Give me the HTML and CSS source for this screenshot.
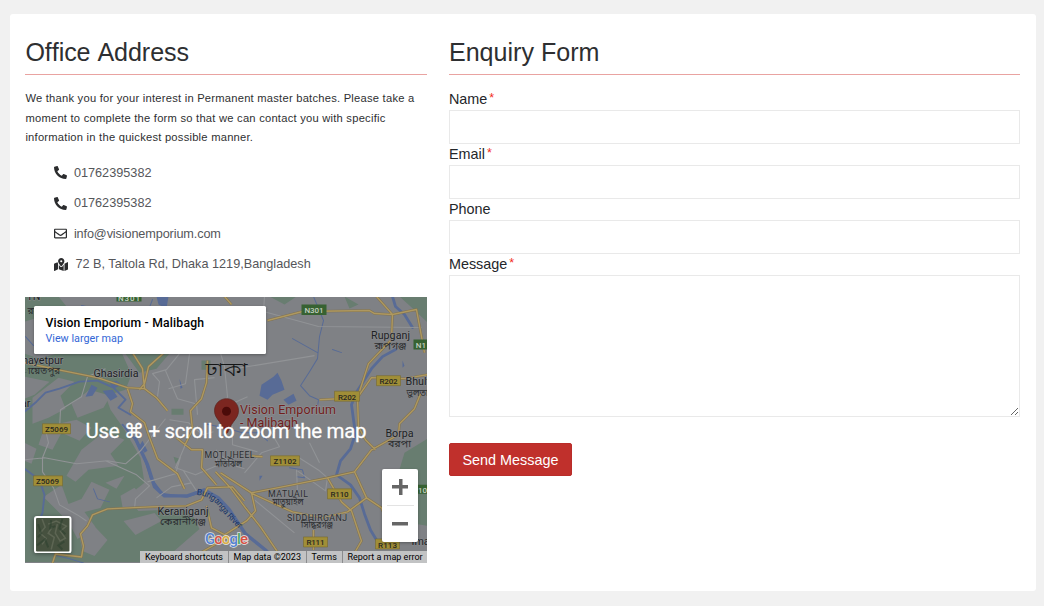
FILE: index.html
```html
<!DOCTYPE html>
<html lang="en">
<head>
<meta charset="utf-8">
<title>Contact</title>
<link rel="stylesheet" href="styles.css">
</head>
<body>
<main class="card">
  <section class="office">
    <h2 class="heading">Office Address</h2>
    <p class="intro">We thank you for your interest in Permanent master batches. Please take a<br>moment to complete the form so that we can contact you with specific<br>information in the quickest possible manner.</p>
    <ul class="contacts">
      <li><svg class="icon phone" viewBox="0 0 512 512"><path d="M493 25 389 1c-11-3-23 3-27 14l-48 112c-4 10-1 21 7 28l60 50c-36 76-98 139-176 176l-50-60c-7-8-18-11-28-7L15 362c-11 5-17 16-14 27l24 104c3 11 12 19 24 19 256 0 463-207 463-463 0-12-8-21-19-24z"/></svg><span class="num">01762395382</span></li>
      <li><svg class="icon phone" viewBox="0 0 512 512"><path d="M493 25 389 1c-11-3-23 3-27 14l-48 112c-4 10-1 21 7 28l60 50c-36 76-98 139-176 176l-50-60c-7-8-18-11-28-7L15 362c-11 5-17 16-14 27l24 104c3 11 12 19 24 19 256 0 463-207 463-463 0-12-8-21-19-24z"/></svg><span class="num">01762395382</span></li>
      <li><svg class="icon" viewBox="0 0 512 512"><path fill-rule="evenodd" d="M464 64H48C21 64 0 85 0 112v288c0 27 21 48 48 48h416c27 0 48-21 48-48V112c0-27-21-48-48-48zm0 48v41c-22 18-58 47-134 106-17 13-50 45-74 45s-57-32-74-45C106 200 70 171 48 153v-41zM48 400V214c23 19 55 44 105 82 21 17 60 56 103 56s81-38 103-56c50-38 82-63 105-82v186z"/></svg><span class="mail">info@visionemporium.com</span></li>
      <li><svg class="icon icon-map" viewBox="0 0 576 512"><path fill-rule="evenodd" d="M288 0c-70 0-126 56-126 126 0 56 82 158 113 195 7 8 19 8 26 0 31-37 113-139 113-195C414 56 358 0 288 0zm0 168a42 42 0 1 1 0-84 42 42 0 0 1 0 84zM20 216c-12 5-20 17-20 30v250c0 11 11 19 22 15l138-63V214c-9-16-16-31-22-46zM288 360c-14 0-27-6-37-17-19-23-40-50-59-77v182l192 64V266c-19 27-40 54-59 77-10 11-23 17-37 17zM554 161l-138 63v288l140-56c12-5 20-17 20-30V176c0-11-11-19-22-15z"/></svg><span class="place">72 B, Taltola Rd, Dhaka 1219,Bangladesh</span></li>
    </ul>
    <div class="map">
      <svg class="map-canvas" viewBox="25.5 297.5 402 265" preserveAspectRatio="none">
        <rect x="25" y="297" width="403" height="266" fill="#7f8185"/>
        <g fill="#687d70">
          <path d="M25 297h34l8 10 28 4 28 44 9 20-6 15-20 6 5 14 14 20 16 28 4 25-18 14 12 14 45-2 10 8 6 12-38 33H25z"/>
          <path d="M125 353l45 1-13 15-17 4zM345 297l14 8-9 4zM400 297h28v26l-18-17zM428 439l-23 14-6 20 17 18 1 33 11 2zM172 409l12 0 0 6-12 0zM202 361h9v9h-9zM174 457l6 2-4 5z"/>
          <path d="M270 297l15 8 12-8z"/>
        </g>
        <g fill="#7f8185">
          <path d="M33 398l26-20 16 4-14 14 5 13-17 9-16 6zM72 404l18-14 21 6-7 12-26 10zM45 427l32-7 15 8-12 13-18-8-9 17-14-5zM82 450l23-18 20 8-14 14 8 12-30 4-13 12-9-6zM44 497l18-12 7 19 13-5 10-17 18 8-9 18-16 4 11 15-18 12-9-17zM121 496l14-8 10 12-7 9-15-2zM106 483l19-7-8 13zM25 377l25 5-15 13-10 4zM78 526l9-8 21 22-13 16-12-5zM124 521l31-8 7 8-26 14zM25 322l24-7 20 36-30 8-14-5zM25 443l12 6-5 15-7-3z"/>
        </g>
        <g fill="#586b96">
          <path d="M262 385l12-8 4-4 4 8 3 9-12 5-5 5-8-4zM284 400l10-6 3 7-8 4zM110 383l7-2 5 4-8 4zM92 385l6 3-5 8-7 1zM103 391l10-1 5 7-7 4zM157 297h12l-2 12-8-4zM140 446l5 7 3-2-5-10zM180 379l3 9-2 1zM403 361l2 5-2 2zM260 476l3 0-3 5z"/>
        </g>
        <g fill="none" stroke="#586b96" stroke-linejoin="round" stroke-linecap="round">
          <path stroke-width="1.900" d="M25 412l12-10 9-9 14-4 20-7 18-1 16 7 12 12-7 8 12 7M25 469l15 11 5 15-2 18-6 14M123 425l13 15 9 18 6 20 12 16 24 3 18-6"/>
          <path stroke-width="3.400" d="M136 439l12 26 7 22 10 9 23 0 17-6 14 8 11 12 16 24 20 16 14 15"/>
          <path stroke-width="2.800" d="M393 297l3 10 9 8 8 13M396 350l-13 7-11 12-16 25-4 11 2 15 2 14-5 15-10 12-4 14 14 10 9 13 5 16 6 16 9 15"/>
          <path stroke-width="1" d="M314 297l10 24-4 16-2 22-8 13-9 14 9 10 9 4-2 14M293 339l25 14M94 489l4 10 12 3M205 424l20 4 18 5 17 0 8 8M290 468l13 2 2 8-8-1M26 337l8 9M82 306l18 4M333 350l9 3M55 555l16 4 13 4M153 300l-6 16"/>
        </g>
        <g fill="none" stroke="#919396" stroke-width="1.1" stroke-linejoin="round">
          <path d="M25 460l20-2 32 6 31-3 18 3 15-13 14-18 11-14M46 430l3 13-6 15 0 14 11 16 6 17 18 10 9 6M60 430l1-20 21-13 6-20 18-8M106 461l31 14 13 11-14 13-1 10M157 498l15-11 20-4M170 420l19 3 14 12 11-3M180 354l-13 16-14 4 7 8-2 15M220 350l5 17 3 30-6 20M265 297l-1 15 55 15 103 1M230 370l85-14M219 410l29-13M298 457l22 14 8 7-2 13-28-20M310 443l10 20M188 440l-12 28 20 7 21-9 0-16M148 482l28-8 5-17M190 354l-4 30-17 5M215 378l-20 2 3 35M255 500l40 33M184 471l13 20M166 371l12 28 18 5M245 473l17-20 18-6-10-17M222 456l13 10 10 3M233 426l0 19 25 7M297 470l1 22"/>
        </g>
        <path fill="none" stroke="#817350" stroke-width="2.500" stroke-linejoin="round" d="M25 363l33 7 40 8 30 10 17 1 12 9 11 13M133 353l10 16 2 20M168 350l-19 17-4 17-5 6M128 389l5 15-2 8 14 11 4 12 9 24 20 15 7 15M208 361l-1 22-5 16-11 12 2 19-8 16M268 321l35-9 67-1 5 3 18 1 24-5 8 43M377 297l16 18-1 25-23 24-11 34 1 29 7 13 10 10M320 400l38-2 14-20 33 1 23-4M421 394l-6 15-15 15-1 11-27 15-17 22-27 6-35 7-41 8-17-11-14-9M328 478l14 24 10 9 4 12 6 18-7 12M355 472l12 26 15 10 10 26M251 493l42 19 30 6 25-6 19-14M252 493l4 18-9 10-22 14M216 472l15 16 15 20 15 19 17 25M53 563l3-9 26 3 2-11-3-12 7-8 5-11 15-6 43-2 36-1 15-6 6-12 25-1 12 14M207 506l5 22 17 9-39 22M177 438l15 12 11 0-1 18 15 17M225 297l7 8M314 530v20M250 456l13 1"/>
        <path fill="none" stroke="#ae9860" stroke-width="1.400" stroke-linejoin="round" d="M25 363l33 7 40 8 30 10 17 1 12 9 11 13M133 353l10 16 2 20M168 350l-19 17-4 17-5 6M128 389l5 15-2 8 14 11 4 12 9 24 20 15 7 15M208 361l-1 22-5 16-11 12 2 19-8 16M268 321l35-9 67-1 5 3 18 1 24-5 8 43M377 297l16 18-1 25-23 24-11 34 1 29 7 13 10 10M320 400l38-2 14-20 33 1 23-4M421 394l-6 15-15 15-1 11-27 15-17 22-27 6-35 7-41 8-17-11-14-9M328 478l14 24 10 9 4 12 6 18-7 12M355 472l12 26 15 10 10 26M251 493l42 19 30 6 25-6 19-14M252 493l4 18-9 10-22 14M216 472l15 16 15 20 15 19 17 25M53 563l3-9 26 3 2-11-3-12 7-8 5-11 15-6 43-2 36-1 15-6 6-12 25-1 12 14M207 506l5 22 17 9-39 22M177 438l15 12 11 0-1 18 15 17M225 297l7 8M314 530v20M250 456l13 1"/>
        <g fill="#376232"><path d="M117 293h25v9h-25zM302 305h25v10.500h-25zM414 340h15v10h-15zM415 485h13v9h-13z"/></g>
        <g fill="#a08e37" stroke="#776a30" stroke-width=".6"><path d="M377 376h24v10h-24zM335 391.500h25v10h-25zM43 424h28v10H43zM34 476h29v10H34zM271 456h29v10h-29zM328 489h24v10h-24zM304 537h24v10h-24zM376 539h24v10h-24z"/></g>
        <g class="shield">
          <text x="389" y="384" textLength="18">R202</text><text x="347.500" y="400" textLength="18">R202</text><text x="57" y="432" textLength="23">Z5069</text><text x="48" y="484" textLength="23">Z5069</text><text x="285.500" y="464" textLength="23">Z1102</text><text x="340" y="497" textLength="18">R110</text><text x="316" y="545.500" textLength="18">R111</text><text x="388" y="548" textLength="19">R113</text>
          <g fill="#c3cfc0"><text x="314.500" y="313.500" textLength="19">N301</text><text x="129.500" y="301" textLength="22">N301</text><text x="421.500" y="348">N1</text><text x="423" y="493">10</text></g>
        </g>
        <g class="label">
          <text x="116.500" y="377" textLength="45">Ghasirdia</text><text x="391" y="339.500" textLength="39">Rupganj</text><text x="406" y="385" text-anchor="start">Bhulta</text><text x="400" y="437.500" textLength="28">Borpa</text><text x="183.500" y="515" textLength="51">Keraniganj</text><text x="64" y="364" text-anchor="end">nayetpur</text><text x="31" y="407" text-anchor="end">ar</text><text x="412" y="545" text-anchor="start">Ima</text><text x="34" y="300">TN</text>
        </g>
        <g class="area"><text x="230" y="458.500" textLength="50">MOTIJHEEL</text><text x="288.500" y="497" textLength="40">MATUAIL</text><text x="317.500" y="521" textLength="60">SIDDHIRGANJ</text></g>
        <g class="bengali">
          <text x="391" y="349.500" textLength="32" lengthAdjust="spacingAndGlyphs">রূপগঞ্জ</text><text x="418" y="396" textLength="22" lengthAdjust="spacingAndGlyphs">ভুলতা</text><text x="400" y="447" textLength="23" lengthAdjust="spacingAndGlyphs">বরপা</text><text x="183.500" y="525" textLength="46" lengthAdjust="spacingAndGlyphs">কেরানীগঞ্জ</text><text x="42" y="374" textLength="37" lengthAdjust="spacingAndGlyphs">ায়েতপুর</text><text x="229" y="467" textLength="27" lengthAdjust="spacingAndGlyphs">মতিঝিল</text><text x="288.500" y="505.500" textLength="31" lengthAdjust="spacingAndGlyphs">মাতুয়াইল</text><text x="317.500" y="528.500" textLength="32" lengthAdjust="spacingAndGlyphs">সিদ্ধিরগঞ্জ</text><text x="34" y="314">রয়</text>
          <text class="dhaka" x="227" y="376" textLength="42" lengthAdjust="spacingAndGlyphs">ঢাকা</text>
        </g>
        <path id="river" fill="none" d="M197 495q15 1 24 14 11 14 23 23"/>
        <text class="river"><textPath href="#river" textLength="56">Buriganga River</textPath></text>
        <path d="M227 399c-6.700 0-12 5-12 12 0 4.500 2 7 5 11 3 4 4.500 7 5.500 10 .8 2 2.200 2 3 0 1-3 2.500-6 5.500-10 3-4 5-6.500 5-11 0-7-5.300-12-12-12z" fill="#7b2620" stroke="#5c211d" stroke-width=".7"/><circle cx="227" cy="411.500" r="4.500" fill="#4b0b09"/>
        <g class="pin-label"><text x="240.500" y="414" textLength="96">Vision Emporium</text><text x="240.500" y="427" textLength="58">- Malibagh</text></g>
        <text class="scroll-hint" x="226.500" y="438" textLength="281">Use <tspan class="cmd">⌘</tspan> + scroll to zoom the map</text>
        <g class="google"><text x="205.500" y="544" textLength="43"><tspan fill="#5282d2">G</tspan><tspan fill="#d75044">o</tspan><tspan fill="#d9ad42">o</tspan><tspan fill="#5282d2">g</tspan><tspan fill="#4ba562">l</tspan><tspan fill="#d75044">e</tspan></text></g>
      </svg>
      <div class="place-card"><strong>Vision Emporium - Malibagh</strong><a>View larger map</a></div>
      <svg class="satellite" viewBox="0 0 37 37"><rect x="1" y="1" width="35" height="35" rx="2" fill="#46513f" stroke="#fff" stroke-width="2"/><g fill="none" stroke="#747967" stroke-width="1.500" opacity=".5"><path d="M8 3l3 8-5 6 6 5-4 6M14 8l8-3 10 5-6 5 5 7-6 3M18 11l-4 6 6 4-3 12M23 8l-2 9 5 8"/></g><g fill="none" stroke="#263c2a" stroke-width="2" opacity=".45"><path d="M3 29l8-6 3 8M17 4l-1 8 5-2M28 3l-3 9 6 6M30 25l-6 4 4 4M4 8l3 9-3 4"/></g></svg>
      <div class="zoom"><i class="glyph plus"></i><i class="glyph"></i></div>
      <div class="legal"><span>Keyboard shortcuts</span><span>Map data ©2023</span><span>Terms</span><span>Report a map error</span></div>
    </div>
  </section>
  <section class="enquiry">
    <h2 class="heading">Enquiry Form</h2>
    <form class="form">
      <label for="name">Name<sup>*</sup></label><input id="name" type="text">
      <label for="email">Email<sup>*</sup></label><input id="email" type="email">
      <label for="phone">Phone</label><input id="phone" type="text">
      <label for="message">Message<sup>*</sup></label><textarea id="message"></textarea>
      <button type="button">Send Message</button>
    </form>
  </section>
</main>
</body>
</html>
```
FILE: styles.css
```css
* { box-sizing: border-box; }
body {
  margin: 0;
  padding: 14px 8px 15px 10px;
  height: 606px;
  background: #f1f1f1;
  color: #2e2f31;
  font-family: "Liberation Sans", Arial, sans-serif;
  overflow: hidden;
}
.card {
  display: grid;
  grid-template-columns: 402px 571.5px;
  gap: 21.5px;
  height: 577px;
  padding: 21px 15.4px;
  background: #fff;
  border-radius: 3px;
}
.heading {
  height: 40px;
  margin: 0;
  border-bottom: 1px solid #e9a3a1;
  font-size: 25.1px;
  font-weight: 400;
  line-height: 34px;
}
.office .heading { font-kerning: none; font-variant-ligatures: none; letter-spacing: -.07px; }
.intro {
  margin: 14px 0 0;
  font-size: 11.2px;
  letter-spacing: .23px;
  line-height: 19.7px;
  white-space: nowrap;
}
.contacts {
  display: grid;
  grid-auto-rows: 30.5px;
  margin: 9.400px 0 0;
  padding: 0 0 0 28.500px;
  list-style: none;
  color: #55565a;
  font-size: 12.7px;
}
.contacts li { display: flex; align-items: center; gap: 7px; white-space: nowrap; }
.icon { width: 13px; height: 13px; fill: #2b2c2e; flex: none; }
.icon-map { width: 14.500px; }
.phone { transform: scaleX(-1); }
.mail { letter-spacing: -.12px; }

.map {
  position: relative;
  height: 265.500px;
  margin-top: 17.800px;
  font-family: Roboto, sans-serif;
  overflow: hidden;
}
.map-canvas { display: block; width: 100%; height: 100%; }
.map-canvas text { text-anchor: middle; font-family: Roboto, sans-serif; }
.map-canvas text[text-anchor="start"] { text-anchor: start; }
.map-canvas text[text-anchor="end"] { text-anchor: end; }
.shield { font-size: 8px; font-weight: 500; fill: #28281f; }
.label { font-size: 10.700px; fill: #202225; stroke: #898b8e; stroke-width: 1.200px; paint-order: stroke; }
.area { font-size: 8.800px; fill: #2b2d30; stroke: #898b8e; stroke-width: 1px; paint-order: stroke; }
.bengali { font-size: 10px; fill: #2b2d30; }
.map-canvas .bengali text { font-family: "Noto Sans Bengali", "Noto Sans", sans-serif; }
.dhaka { font-size: 20px; font-weight: 300; fill: #151617; }
.map-canvas .river { text-anchor: start; font-size: 8.500px; fill: #183568; }
.pin-label { font-size: 12.500px; fill: #711d1b; stroke: #929296; stroke-width: 1.200px; paint-order: stroke; }
.map-canvas .pin-label text { text-anchor: start; }
.scroll-hint { font-size: 20.500px; fill: #fff; stroke: #fff; stroke-width: .25px; }
.cmd { font-family: "DejaVu Sans", sans-serif; font-size: 20px; }
.google { font-size: 15px; font-weight: 500; stroke: #e5e5e5; stroke-width: 1.500px; paint-order: stroke; }
.map-canvas .google text { text-anchor: start; }
.place-card {
  position: absolute;
  left: 9px;
  top: 9px;
  width: 232px;
  height: 47.500px;
  padding: 9px 11px;
  background: #fff;
  border-radius: 1.500px;
  box-shadow: 0 1px 3px rgba(0, 0, 0, .3);
  white-space: nowrap;
}
.place-card strong { display: block; color: #000; font-size: 12.200px; font-weight: 500; letter-spacing: .19px; line-height: 16px; }
.place-card a { display: block; color: #3367d6; font-size: 10.800px; line-height: 16px; }
.satellite { position: absolute; left: 9px; top: 218.500px; width: 37.500px; height: 37.500px; filter: drop-shadow(0 1px 2px rgba(0, 0, 0, .4)); }
.zoom {
  position: absolute;
  left: 357px;
  top: 171.500px;
  display: grid;
  grid-template-rows: 1fr 1fr;
  place-items: center;
  width: 36px;
  height: 73px;
  border-radius: 2px;
  background: linear-gradient(#e3e3e3, #e3e3e3) center / 27px 1px no-repeat #fff;
  box-shadow: 0 1px 3px rgba(0, 0, 0, .3);
}
.glyph { width: 16px; height: 16px; background: linear-gradient(#666, #666) center / 16px 3.500px no-repeat; }
.plus { background: linear-gradient(#666, #666) center / 16px 3.500px no-repeat, linear-gradient(#666, #666) center / 3.500px 16px no-repeat; }
.legal { position: absolute; right: 0; bottom: 0; display: flex; height: 12px; color: #000; font-size: 9px; line-height: 13px; white-space: nowrap; }
.legal span { padding: 0 4.800px; background: #c2c3c4; border-left: 1px solid #8b8c8e; }
.legal span:first-child { border-left: 0; }

.form { padding-top: 13px; }
.form label { display: block; height: 22px; color: #24262a; font-size: 14.400px; line-height: 23px; }
.form sup { margin-left: 2px; color: #f22c22; font-size: 12.500px; line-height: 0; vertical-align: 2.500px; }
.form input, .form textarea { display: block; width: 100%; height: 33px; margin: 0; border: 1px solid #e9e9e9; border-radius: 0; background: #fff; outline: 0; }
.form input { height: 34px; margin-bottom: -1px; }
.form textarea { height: 142px; resize: vertical; }
.form button { display: block; width: 123px; height: 33px; margin-top: 26px; padding: 0; border: 1px solid #b92d2a; border-radius: 2px; background: #c0302c; color: #fff; font: 14.400px "Liberation Sans", Arial, sans-serif; }
```
